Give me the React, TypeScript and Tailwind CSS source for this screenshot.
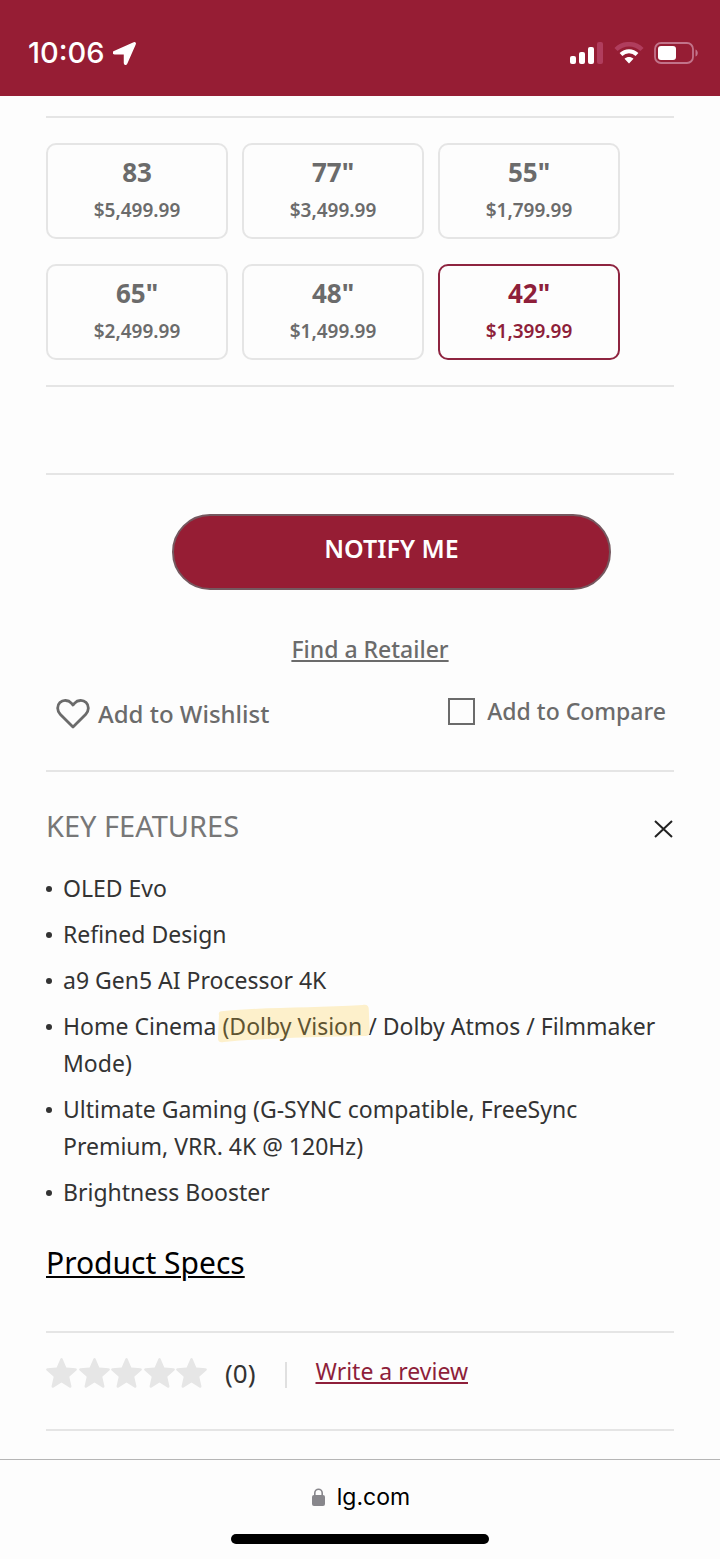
import { useState, type FC, type ReactNode } from 'react';

interface SizeOption {
  label: string;
  price: string;
}

const SIZES: SizeOption[] = [
  { label: '83', price: '$5,499.99' },
  { label: '77"', price: '$3,499.99' },
  { label: '55"', price: '$1,799.99' },
  { label: '65"', price: '$2,499.99' },
  { label: '48"', price: '$1,499.99' },
  { label: '42"', price: '$1,399.99' },
];

const FEATURES: ReactNode[] = [
  'OLED Evo',
  'Refined Design',
  'a9 Gen5 AI Processor 4K',
  <>
    Home Cinema <Highlight>(Dolby Vision</Highlight> / Dolby Atmos / Filmmaker Mode)
  </>,
  'Ultimate Gaming (G-SYNC compatible, FreeSync Premium, VRR. 4K @ 120Hz)',
  'Brightness Booster',
];

function Highlight({ children }: { children: ReactNode }) {
  return (
    <span className="relative isolate text-[#5f5431]">
      <svg
        className="absolute -left-1.5 -top-1.5 -z-10 h-10 w-[calc(100%+14px)]"
        viewBox="0 0 154 40"
        preserveAspectRatio="none"
        aria-hidden="true"
      >
        <path
          d="M3 11 C2 8 4 7 8 7 C50 3 100 4 147 1 C151 0 153 2 153 5 L154 28 C154 31 152 32 149 32 C100 33 50 34 8 38 C4 39 2 38 2 34 Z"
          fill="#fdf0cb"
        />
      </svg>
      {children}
    </span>
  );
}

const StatusBar: FC = () => (
  <header className="flex h-24 shrink-0 items-center justify-between bg-[#961d34] pl-7 pr-[21px] pt-2.5 font-['Inter',sans-serif] text-white">
    <div className="flex items-center gap-2">
      <span className="text-[29px] font-medium leading-9">10:06</span>
      <svg width="23" height="23" viewBox="0 0 22 22" fill="white" stroke="white" strokeWidth="1.400" strokeLinejoin="round" aria-hidden="true">
        <path d="M1.200 9.300 20 .9c1-.4 1.500.1 1.100 1.100L13 20.600c-.6 1.200-2 .9-2-.4v-8.300c0-.4-.2-.6-.6-.6L1.600 11.300c-1.400 0-1.600-1.400-.4-2Z" />
      </svg>
    </div>
    <div className="flex items-center">
      <svg width="34" height="22" viewBox="0 0 34 22" aria-hidden="true">
        <rect x="0" y="14" width="6" height="8" rx="2" fill="white" />
        <rect x="9" y="10" width="6" height="12" rx="2" fill="white" />
        <rect x="18" y="5" width="6" height="17" rx="2" fill="white" />
        <rect x="27" y="0" width="6" height="22" rx="2" fill="#b03d5d" />
      </svg>
      <svg className="ml-2.5" width="30" height="22" viewBox="0 0 30 22" fill="none" aria-hidden="true">
        <path d="M2 7.500a18.500 18.500 0 0 1 26 0" stroke="#b03d5d" strokeWidth="4.500" />
        <path d="M7 12.500a11.500 11.500 0 0 1 16 0" stroke="white" strokeWidth="4" />
        <path d="m15 21.500 4.500-4.700c-2.600-2.400-6.400-2.400-9 0Z" fill="white" />
      </svg>
      <svg className="ml-2.5" width="45" height="22" viewBox="0 0 45 22" fill="none" aria-hidden="true">
        <rect x="1" y="1" width="38" height="20" rx="6" stroke="#c2738a" strokeWidth="1.800" />
        <rect x="4" y="4" width="18" height="14" rx="3" fill="white" />
        <path d="M41.500 7.500c3 1 3 6 0 7Z" fill="#c2738a" />
      </svg>
    </div>
  </header>
);

const Star: FC = () => (
  <svg width="31" height="30" viewBox="0 0 31 30" fill="#e6e6e6" aria-hidden="true">
    <path d="M14.300.9c.5-1.200 1.900-1.200 2.400 0l3.600 8.600 9.300.8c1.300.1 1.700 1.500.7 2.300l-7 6.100 2.100 9.400c.3 1.300-.9 2-2 1.400l-7.900-4.900-7.900 4.900c-1.100.6-2.300-.1-2-1.400l2.100-9.400-7-6.100c-1-.8-.6-2.200.7-2.300l9.300-.8Z" />
  </svg>
);

export default function App() {
  const [selected, setSelected] = useState('42"');
  const [expanded, setExpanded] = useState(true);

  return (
    <div className="flex min-h-screen flex-col bg-[#fdfdfd] font-['Noto_Sans',sans-serif] text-[#6b6b6b]">
      <StatusBar />

      <main className="grow px-[46px] pt-5">
        {/* Screen sizes */}
        <section className="grid grid-cols-3 gap-x-3.5 gap-y-[25px] border-y-2 border-[#e5e5e5] py-[25px] pr-[54px]">
          {SIZES.map((s) => (
            <button
              key={s.label}
              type="button"
              aria-pressed={selected === s.label}
              onClick={() => setSelected(s.label)}
              className={`flex h-24 flex-col items-center rounded-[10px] border-2 pt-[11px] ${
                selected === s.label ? 'border-[#8e2440] text-[#8e1f3a]' : 'border-[#e5e5e5]'
              }`}
            >
              <span className="text-[26px] font-bold leading-8">{s.label}</span>
              <span className="mt-2 text-[19px] font-semibold leading-7">{s.price}</span>
            </button>
          ))}
        </section>

        {/* Purchase actions */}
        <section className="mt-[86px] border-y-2 border-[#e5e5e5] pb-[38px] pt-[39px]">
          <div className="pl-[126px] pr-[63px]">
            <button
              type="button"
              className="flex h-[76px] w-full items-center justify-center rounded-full border-2 border-[#75585f] bg-[#961d34] pb-1.5 text-[25px] font-semibold text-white"
            >
              NOTIFY ME
            </button>
          </div>
          <div className="mt-[41px] pl-5 text-center text-[23px] font-medium leading-9">
            <a href="#retailers" className="underline decoration-2 underline-offset-2">
              Find a Retailer
            </a>
          </div>
          <div className="mt-[26px] flex items-start justify-between pl-2.5 pr-2 font-medium leading-9">
            <button type="button" className="mt-[3px] flex items-center gap-2 text-2xl leading-9">
              <svg width="34" height="30" viewBox="0 0 34 30" fill="none" stroke="#6b6b6b" strokeWidth="2.800" strokeLinejoin="round" aria-hidden="true">
                <path d="M17 28 4.200 15.200C1 12 .8 6.600 3.900 3.600c3.200-3.100 8.400-2.700 11.400.5L17 6l1.700-1.900c3-3.200 8.200-3.600 11.400-.5 3.100 3 2.900 8.400-.3 11.600Z" />
              </svg>
              Add to Wishlist
            </button>
            <label className="flex items-center gap-3 pb-px text-[23px]">
              <input type="checkbox" className="size-[27px] appearance-none border-2 border-[#6b6b6b] checked:bg-[#6b6b6b]" />
              Add to Compare
            </label>
          </div>
        </section>

        {/* Key features */}
        <section className="border-b-2 border-[#e5e5e5] pb-12 pt-9">
          <div className="flex items-center justify-between">
            <h2 className="text-[29px] leading-9 text-[#777]">KEY FEATURES</h2>
            <button type="button" className="pt-1.5" aria-label="Toggle key features" onClick={() => setExpanded(!expanded)}>
              <svg width="21" height="20" viewBox="0 0 21 20" stroke="#222" strokeWidth="2" aria-hidden="true">
                <path d="M2 2 19 18M19 2 2 18" />
              </svg>
            </button>
          </div>
          {expanded && (
            <ul className="mt-[26px] flex flex-col gap-[9px] text-[23px] leading-[37px] text-[#333]">
              {FEATURES.map((feature, idx) => (
                <li key={idx} className="flex items-start gap-[11px]">
                  <span className="mt-4 size-1.5 shrink-0 rounded-full bg-[#333]" />
                  <span>{feature}</span>
                </li>
              ))}
            </ul>
          )}
          <a href="#specs" className="mt-8 block w-fit text-3xl leading-10 text-black underline decoration-2 underline-offset-2">
            Product Specs
          </a>
        </section>

        {/* Reviews */}
        <section className="flex h-[98px] items-center border-b-2 border-[#e5e5e5] pb-4 text-[#333]">
          <div className="flex w-[161px] justify-between">
            {[1, 2, 3, 4, 5].map((n) => (
              <Star key={n} />
            ))}
          </div>
          <span className="ml-[18px] text-[26px]">(0)</span>
          <span className="ml-[30px] mt-1 h-[26px] w-0.5 bg-[#e0e0e0]" />
          <a href="#review" className="ml-7 pb-1 text-[23px] text-[#8e1f3a] underline decoration-2 underline-offset-2">
            Write a review
          </a>
        </section>
      </main>

      <footer className="flex h-[100px] shrink-0 flex-col items-center border-t border-[#b5b5b5] pt-[19px] font-['Inter',sans-serif] text-black">
        <div className="flex items-center gap-3 pl-0.5 text-[23px] leading-9">
          <svg width="13" height="18" viewBox="0 0 13 18" aria-hidden="true">
            <rect y="7" width="13" height="11" rx="2" fill="#88878c" />
            <path d="M2.800 8V5a3.700 3.700 0 0 1 7.400 0v3" fill="none" stroke="#88878c" strokeWidth="1.600" />
          </svg>
          lg.com
        </div>
        <div className="mt-[19px] h-2.5 w-[258px] rounded-full bg-black" />
      </footer>
    </div>
  );
}
